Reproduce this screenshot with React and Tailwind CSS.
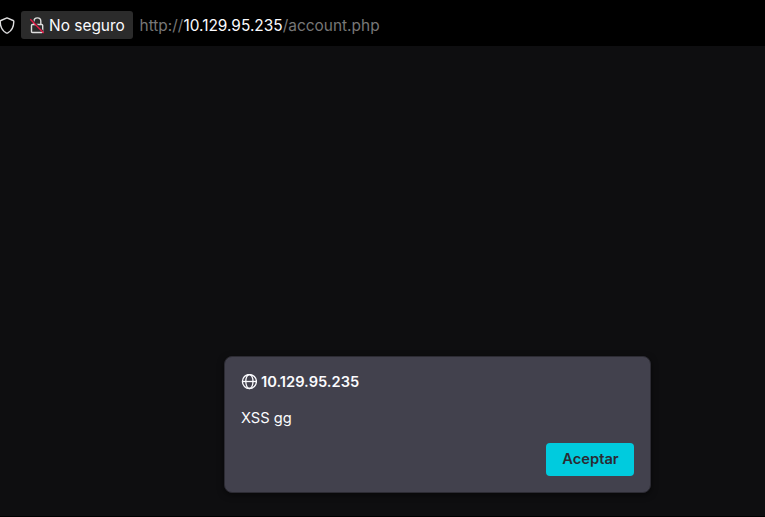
function Shield() {
  return (
    <svg className="-ml-px h-[17px] w-4 shrink-0" viewBox="0 0 16 17" fill="none" stroke="#dededf" strokeWidth="1.4" strokeLinejoin="round">
      <path d="M8 .9 14.100 3.500c.6.3.8.6.7 1.200-.1 5.300-2 8.900-6 11.200q-.8.4-1.600 0c-4-2.300-5.900-5.900-6-11.200-.1-.6.1-.9.7-1.200Z" />
    </svg>
  );
}

function BrokenLock() {
  return (
    <svg className="h-[17px] w-4 shrink-0" viewBox="0 0 16 17" fill="none">
      <path d="M5 7.500V4.300a3.400 3.400 0 0 1 6.800 0V7.500M3.500 7.500h9.200q1 0 1 1v6q0 1-1 1H3.500q-1 0-1-1v-6q0-1 1-1Z" stroke="#dedede" strokeWidth="1.400" />
      <path d="M3 3 14 14.200" stroke="#2b2b2b" strokeWidth="1.600" />
      <path d="M1.300 2.300 14.700 15.900" stroke="#e81a48" strokeWidth="1.400" />
    </svg>
  );
}

function Globe() {
  return (
    <svg className="size-4 shrink-0" viewBox="0 0 16 16" fill="none" stroke="#fbfbfe" strokeWidth="1.300">
      <circle cx="8.400" cy="7.500" r="7" />
      <ellipse cx="8.400" cy="7.500" rx="3.600" ry="7" />
      <path d="M1.400 7.500h14" />
    </svg>
  );
}

function AddressBar() {
  return (
    <header className="flex h-[46px] shrink-0 items-start bg-black pt-[11px] text-[15.45px]">
      <div className="flex h-7 items-center">
        <Shield />
      </div>
      <div className="ml-1.5 flex h-7 w-28 shrink-0 items-center rounded-[3px] bg-[#2b2b2b] pl-2 text-[#fbfbfe]">
        <BrokenLock />
        <span className="ml-1 whitespace-nowrap pt-0.5">No seguro</span>
      </div>
      <div className="ml-[6.5px] flex h-7 items-center whitespace-nowrap pt-0.5 text-[#777777]">
        <span>http://</span>
        <span className="text-[#fbfbfe]">10.129.95.235</span>
        <span>/account.php</span>
      </div>
    </header>
  );
}

export default function App() {
  return (
    <div className="flex h-screen w-full flex-col overflow-hidden border-b border-black bg-[#0e0e10] font-['Inter',sans-serif]">
      <AddressBar />
      <main className="pl-[224px] pt-[310px]">
        <section className="flex h-[137px] w-[427px] flex-col rounded-lg border border-[#2c2b33] bg-[#42414d] px-4 pt-4 text-[14.667px] text-[#fbfbfe] shadow-[0_2px_6px_rgba(0,0,0,0.5)]">
          <div className="flex h-[18px] items-center gap-1 font-semibold leading-[18px]">
            <Globe />
            <span>10.129.95.235</span>
          </div>
          <p className="mt-[18px] leading-[18px]">XSS gg</p>
          <button className="mt-4 h-[33px] w-[88px] self-end rounded-[4px] bg-[#00cbde] pb-0.5 pl-px font-semibold text-[#2b2a33]">
            Aceptar
          </button>
        </section>
      </main>
    </div>
  );
}
